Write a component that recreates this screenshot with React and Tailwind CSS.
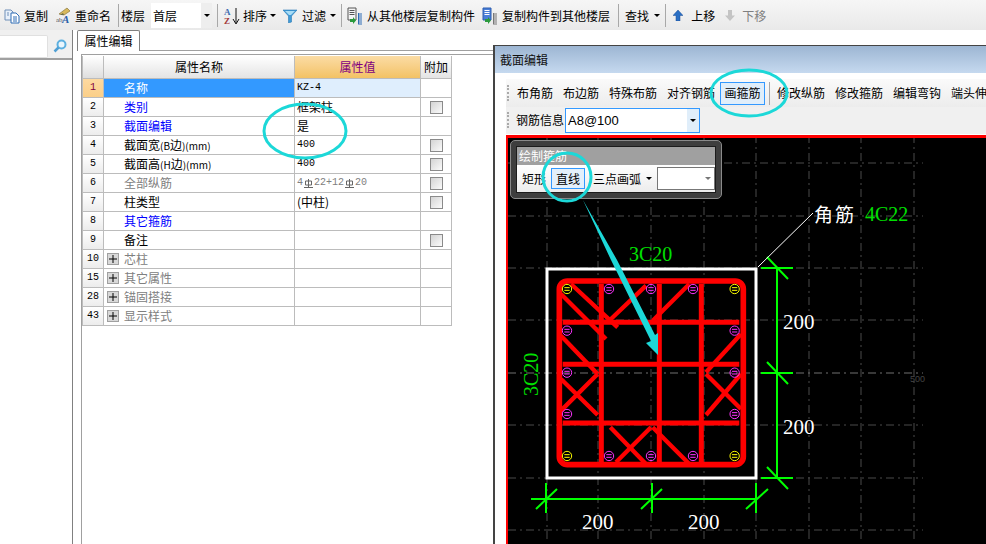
const CopyIcon = () => (
  <svg width="16" height="16" viewBox="0 0 16 16" className="shrink-0">
    <path d="M1 2h6l2 2v8H1z" fill="#e8f0fa" stroke="#6f8fb8" />
    <path d="M7 5h5l3 3v7H7z" fill="#fff" stroke="#2f6cb5" />
    <path d="M9 9h4M9 11h4M9 13h4" stroke="#2f6cb5" />
    <path d="M3 5h2M3 7h2" stroke="#6f8fb8" />
  </svg>
)

const RenameIcon = () => (
  <svg width="17" height="18" viewBox="0 0 17 18" className="shrink-0 -mr-px">
    <path d="M3 7 11 1l3 3-6 4z" fill="#d8b85a" stroke="#8a7a40" strokeWidth="0.7" />
    <path d="M4 8l3-2 1 2z" fill="#6b6b4a" />
    <text x="0" y="15" fontSize="7" fontFamily="Liberation Serif" fill="#555">
      ab
    </text>
    <text x="6" y="16" fontSize="11" fontStyle="italic" fontWeight="700" fontFamily="Liberation Serif" fill="#2a5fa8">
      A
    </text>
  </svg>
)

const SortIcon = () => (
  <svg width="17" height="18" viewBox="0 0 17 18" className="shrink-0">
    <text x="1" y="8" fontSize="9" fontWeight="700" fontFamily="Liberation Serif" fill="#3f6db0">
      A
    </text>
    <text x="1" y="17" fontSize="9" fontWeight="700" fontFamily="Liberation Serif" fill="#a33a3a">
      Z
    </text>
    <path d="M13 1v15M10 12l3 5 3-5" fill="none" stroke="#111" />
  </svg>
)

const FilterIcon = () => (
  <svg width="14" height="14" viewBox="0 0 14 14" className="shrink-0">
    <path d="M0 1h14L8.500 7v6l-3 1V7z" fill="#3f9ad6" stroke="#2b7ab5" strokeWidth="0.6" />
    <path d="M2 2h10L8 6H6z" fill="#a9dcf5" />
  </svg>
)

const FloorCopyIcon = ({ blue }) => (
  <svg width="16" height="18" viewBox="0 0 16 18" className="shrink-0">
    <path d="M1 1h8v12H1z" fill={blue ? '#4a7fd8' : '#f4f4f4'} stroke={blue ? '#2f5fb0' : '#555'} />
    <path d="M2.500 3.500h5M2.500 5.500h5M2.500 7.500h5" stroke={blue ? '#fff' : '#555'} />
    <path d="M3 12h3v-2l3 3.500-3 3.500v-2H3z" fill="#2a9a3c" />
    <path d="M11 7h4M11 9h4M11 11h4M11 13h4M11 15h4M11 17h4" stroke={blue ? '#777' : '#2f6cb5'} />
    <path d="M11.500 6v11" stroke={blue ? '#777' : '#2f6cb5'} />
  </svg>
)

const ArrowIcon = ({ up }) => (
  <svg width="10" height="11" viewBox="0 0 10 11" className="shrink-0">
    {up ? (
      <path d="M5 0l5 5.500H7V11H3V5.500H0z" fill="#2a6fc4" stroke="#1c4f96" strokeWidth="0.5" />
    ) : (
      <path d="M3 0h4v5.500h3L5 11 0 5.500h3z" fill="#c4c4c4" />
    )}
  </svg>
)

const Caret = ({ className = '', color = 'border-t-black' }) => (
  <span
    className={`h-0 w-0 shrink-0 border-x-[3px] border-t-[3px] border-x-transparent ${color} ${className}`}
  />
)

const Sep = ({ className = '' }) => (
  <span className={`h-[23px] w-px shrink-0 bg-[#a8a8a8] ${className}`} />
)

const Grip = ({ className = '' }) => (
  <span
    className={`h-[16px] w-[2px] shrink-0 border-l-2 border-dotted border-[#aaa] ${className}`}
  />
)

const TopToolbar = () => (
  <div className="flex h-[30px] items-center whitespace-nowrap bg-gradient-to-b from-[#f6f6f6] to-[#e9e9e9] pl-[4px] pt-[1px] text-[12px] leading-none text-black">
    <CopyIcon />
    <span className="ml-[4px]">复制</span>
    <span className="ml-[8px]">
      <RenameIcon />
    </span>
    <span className="ml-[3px]">重命名</span>
    <Sep className="ml-[7px]" />
    <span className="ml-[2px]">楼层</span>
    <div className="ml-[6px] flex h-[25px] w-[61px] items-center bg-white pl-[2px]">
      <span className="flex-1">首层</span>
      <span className="flex h-full w-[11px] items-center justify-center bg-[#eeeeee]">
        <Caret />
      </span>
    </div>
    <Sep className="ml-[5px]" />
    <span className="ml-[5px]">
      <SortIcon />
    </span>
    <span className="ml-[3px]">排序</span>
    <Caret className="ml-[3px]" />
    <span className="ml-[7px]">
      <FilterIcon />
    </span>
    <span className="ml-[5px]">过滤</span>
    <Caret className="ml-[4px]" />
    <Sep className="ml-[5px]" />
    <span className="ml-[5px]">
      <FloorCopyIcon />
    </span>
    <span className="ml-[4px]">从其他楼层复制构件</span>
    <span className="ml-[7px]">
      <FloorCopyIcon blue />
    </span>
    <span className="ml-[4px]">复制构件到其他楼层</span>
    <Sep className="ml-[8px]" />
    <span className="ml-[6px]">查找</span>
    <Caret className="ml-[5px]" />
    <Sep className="ml-[5px]" />
    <span className="ml-[7px]">
      <ArrowIcon up />
    </span>
    <span className="ml-[8px]">上移</span>
    <span className="ml-[10px]">
      <ArrowIcon />
    </span>
    <span className="ml-[7px] text-[#808080]">下移</span>
  </div>
)

const SidePanel = () => (
  <div className="h-full w-[73px] shrink-0 border-r border-[#808080]">
    <div className="flex h-[30px] items-center border-b-2 border-[#a0a0a0] bg-[#f0f0f0] pt-[5px] pb-[1px]">
      <div className="h-[23px] w-[48px] rounded-r-[2px] border border-l-0 border-[#e0e0e0] bg-white" />
      <svg width="14" height="14" viewBox="0 0 14 14" className="ml-[5px]">
        <circle cx="8.500" cy="5.500" r="4" fill="#eaf6fd" stroke="#5db0e0" strokeWidth="2" />
        <path d="M5.500 8.500 1.500 12.500" stroke="#4f9fd4" strokeWidth="2.500" />
      </svg>
    </div>
  </div>
)

const Narrow = ({ children }) => <span className="text-[10px]">{children}</span>

const rows = [
  { no: '1', name: '名称', value: 'KZ-4', selected: true, mono: true },
  { no: '2', name: '类别', value: '框架柱', color: 'text-[#0000ff]', check: true },
  { no: '3', name: '截面编辑', value: '是', color: 'text-[#0000ff]' },
  {
    no: '4',
    name: (
      <>
        截面宽<Narrow>(B</Narrow>边<Narrow>)(mm)</Narrow>
      </>
    ),
    value: '400',
    check: true,
    mono: true,
  },
  {
    no: '5',
    name: (
      <>
        截面高<Narrow>(H</Narrow>边<Narrow>)(mm)</Narrow>
      </>
    ),
    value: '400',
    check: true,
    mono: true,
  },
  { no: '6', name: '全部纵筋', rebar: true, color: 'text-[#808080]', check: true },
  { no: '7', name: '柱类型', value: '(中柱)', check: true },
  { no: '8', name: '其它箍筋', color: 'text-[#0000ff]' },
  { no: '9', name: '备注', check: true },
  { no: '10', name: '芯柱', group: true },
  { no: '15', name: '其它属性', group: true },
  { no: '28', name: '锚固搭接', group: true },
  { no: '43', name: '显示样式', group: true },
]

const RebarMark = () => (
  <svg width="9" height="9" viewBox="0 0 9 9" className="mx-[1px] shrink-0">
    <path d="M1.500 2h6v4h-6zM4.500 0v8M0 8.500h9" fill="none" stroke="#666" />
  </svg>
)

const Checkbox = () => (
  <span className="block h-[13px] w-[13px] border border-[#8a8a8a] bg-gradient-to-br from-[#d4d4d4] to-[#fbfbfb]" />
)

const PlusBox = () => (
  <span className="absolute left-[3px] top-[3px] flex h-[12px] w-[12px] items-center justify-center border border-[#a0a0a0] bg-[#d8d8d8] text-[13px] leading-none text-black">
    <svg width="8" height="8" viewBox="0 0 8 8">
      <path d="M4 0v8M0 4h8" stroke="#000" />
    </svg>
  </span>
)

const PropertyRow = ({ row }) => (
  <div className="grid h-[19px] grid-cols-[21px_191px_126px_31px] text-[12px] leading-none">
    <div
      className={`flex items-center justify-center border-b border-r border-[#bcbcbc] font-['Liberation_Mono',monospace] text-[10px] ${
        row.selected
          ? 'bg-gradient-to-b from-[#fdd9a0] to-[#fbcf88] text-[#800040]'
          : 'bg-gradient-to-b from-white to-[#ececec] text-black'
      }`}
    >
      {row.no}
    </div>
    <div
      className={`relative flex items-center border-b border-r border-[#bcbcbc] pl-[20px] ${
        row.selected ? 'bg-[#3399ff] text-white' : row.color || (row.group ? 'text-[#808080]' : 'text-black')
      }`}
    >
      {row.group ? <PlusBox /> : null}
      <span>{row.name}</span>
    </div>
    <div
      className={`flex items-center border-b border-r border-[#bcbcbc] pl-[2px] ${
        row.selected ? 'bg-[#dfeefd]' : ''
      } ${row.mono ? "font-['Liberation_Mono',monospace] text-[10px]" : ''}`}
    >
      {row.rebar ? (
        <span className="flex items-center font-['Liberation_Mono',monospace] text-[10px] text-[#808080]">
          4<RebarMark />
          22+12
          <RebarMark />
          20
        </span>
      ) : (
        row.value
      )}
    </div>
    <div className="flex items-center justify-center border-b border-r border-[#bcbcbc]">
      {row.check ? <Checkbox /> : null}
    </div>
  </div>
)

const PropertyPanel = () => (
  <div className="flex h-full flex-1 flex-col pl-[4px]">
    <div className="flex h-[21px] shrink-0">
      <div className="flex w-[63px] items-center justify-center rounded-t-[2px] border border-b-0 border-[#808080] bg-white text-[12px]">
        属性编辑
      </div>
      <div className="flex-1 border-b border-[#a0a0a0]" />
    </div>
    <div className="ml-[4px] mt-[3px] flex-1 border-l border-t border-[#a0a0a0] pt-px">
      <div className="w-[369px] border-l border-[#bcbcbc]">
        <div className="grid h-[23px] grid-cols-[21px_191px_126px_31px] text-[12px] leading-none">
          <div className="border-b border-r border-[#bcbcbc] bg-gradient-to-b from-white to-[#dedede]" />
          <div className="flex items-center justify-center border-b border-r border-[#bcbcbc] bg-gradient-to-b from-white to-[#e4e4e4]">
            属性名称
          </div>
          <div className="flex items-center justify-center border-b border-r border-[#bcbcbc] bg-gradient-to-b from-[#fbdca4] to-[#f3c264] text-[#800080]">
            属性值
          </div>
          <div className="flex items-center justify-center border-b border-r border-[#bcbcbc] bg-gradient-to-b from-white to-[#e4e4e4]">
            附加
          </div>
        </div>
        {rows.map((row) => (
          <PropertyRow key={row.no} row={row} />
        ))}
      </div>
    </div>
  </div>
)

const gridX = [546, 597, 650, 703, 755, 808, 860, 913]
const gridY = [164, 217, 269, 321, 426, 479, 531]
const barX = [138, 264, 390, 516, 641]
const barY = [215, 341, 465]
const ties = [
  [150, 75, 290, 205],
  [120, 105, 255, 240],
  [120, 230, 230, 345],
  [270, 180, 375, 80],
  [395, 185, 505, 75],
  [660, 225, 555, 340],
  [120, 360, 230, 468],
  [230, 345, 120, 455],
  [555, 345, 660, 450],
  [660, 345, 555, 468],
  [268, 505, 375, 615],
  [390, 505, 285, 610],
  [395, 505, 505, 615],
]

const Bar = ({ x, y, color }) => (
  <g stroke={color} strokeWidth="3" fill="none">
    <circle cx={x} cy={y} r="14" />
    <path d={`M${x - 8} ${y - 4}h16M${x - 8} ${y + 4}h16`} strokeWidth="3" />
  </g>
)

const Section = () => (
  <svg width="481" height="408" viewBox="507 139 481 408" className="block">
    <g stroke="#4a4a4a" strokeWidth="1" strokeDasharray="8 4 2 4">
      {gridX.map((x) => (
        <line key={x} x1={x} y1="136" x2={x} y2="544" />
      ))}
      {gridY.map((y) => (
        <line key={y} x1="507" y1={y} x2="922" y2={y} />
      ))}
      <line x1="507" y1="374" x2="922" y2="374" stroke="#707070" />
    </g>
    <rect x="546" y="270" width="209" height="209" fill="none" stroke="#fff" strokeWidth="3" />
    <g transform="translate(520 260) scale(0.3333)">
      <g stroke="#ff0000" strokeWidth="15" fill="none">
        <rect x="115" y="66" width="552" height="551" rx="24" strokeWidth="17" />
        <path d="M241 75V610M415 75V610M541 75V610" />
        <path d="M125 190H655M125 316H655M125 492H655" />
        {ties.map((t) => (
          <line key={t.join('-')} x1={t[0]} y1={t[1]} x2={t[2]} y2={t[3]} strokeWidth="13" />
        ))}
      </g>
      {barX.map((x) => (
        <Bar key={x} x={x} y={90} color={x === 138 || x === 641 ? '#ffff00' : '#ff33ff'} />
      ))}
      {barX.map((x) => (
        <Bar key={x} x={x} y={591} color={x === 138 || x === 641 ? '#ffff00' : '#ff33ff'} />
      ))}
      {barY.map((y) => (
        <Bar key={y} x={138} y={y} color="#ff33ff" />
      ))}
      {barY.map((y) => (
        <Bar key={y} x={641} y={y} color="#ff33ff" />
      ))}
    </g>
    <g stroke="#00ff00" strokeWidth="2" fill="none">
      <path d="M776 269V479M760 269H792M760 374H792M760 479H792" />
      <path d="M766 258 787 280M766 363 787 385M766 468 787 490" />
      <path d="M530 500H755M545 484V514M651 484V514M755 484V514" />
      <path d="M535 510 556 490M640 510 661 490M745 510 767 490" />
    </g>
    <line x1="757" y1="268" x2="812" y2="214" stroke="#fff" strokeWidth="1" />
    <g fontFamily="Liberation Serif">
      <text x="628" y="262" fontSize="20" fill="#00e000">
        3C20
      </text>
      <text x="0" y="0" fontSize="20" fill="#00e000" transform="translate(537 397) rotate(-90)">
        3C20
      </text>
      <text x="864" y="222" fontSize="20" fill="#00e000">
        4C22
      </text>
      <text x="782" y="330" fontSize="21" fill="#fff">
        200
      </text>
      <text x="782" y="435" fontSize="21" fill="#fff">
        200
      </text>
      <text x="581" y="530" fontSize="21" fill="#fff">
        200
      </text>
      <text x="687" y="530" fontSize="21" fill="#fff">
        200
      </text>
    </g>
    <text x="813" y="223" fontSize="19" fill="#fff" fontFamily="Noto Sans CJK SC" letterSpacing="2">
      角筋
    </text>
    <text x="909" y="383" fontSize="9" fill="#444" fontFamily="Liberation Sans">
      500
    </text>
  </svg>
)

const DrawTieBar = () => (
  <div className="absolute left-[2px] top-[2px] z-10 w-[212px] rounded-[5px] border border-[#8a8a8a] bg-[#3e3e3e] px-[5px] py-[5px] text-[12px] leading-none whitespace-nowrap">
    <div className="border border-[#1c1c1c]">
      <div className="flex h-[18px] items-center bg-[#a0a0a0] pl-[2px] text-white">绘制箍筋</div>
      <div className="flex h-[27px] items-center bg-gradient-to-b from-white to-[#ececec] pl-[5px] text-black">
        <span className="shrink-0">矩形</span>
        <span className="ml-[5px] flex h-[21px] w-[34px] shrink-0 items-center justify-center border border-[#3399ff] bg-[#e4f0fb]">
          直线
        </span>
        <span className="ml-[8px] shrink-0">三点画弧</span>
        <Caret className="ml-[5px]" />
        <div className="ml-[5px] flex h-[23px] w-[58px] shrink-0 items-center justify-end border border-[#777] bg-white pr-[3px]">
          <Caret color="border-t-[#777]" />
        </div>
      </div>
    </div>
  </div>
)

const SectionWindow = () => (
  <div className="absolute left-[493px] top-[45px] h-[499px] w-[493px] border-l-2 border-t border-[#444] bg-white pl-[11px]">
    <div className="-ml-[11px] flex h-[27px] items-center bg-gradient-to-b from-[#9db6d3] to-[#c5d9ef] pl-[5px] text-[12px] text-[#111]">
      截面编辑
    </div>
    <div className="pt-[6px] text-[12px] leading-none text-black">
      <div className="flex h-[28px] items-center bg-gradient-to-b from-[#fafafa] to-[#ececec] pl-[1px] whitespace-nowrap">
        <Grip />
        <span className="ml-[8px] shrink-0">布角筋</span>
        <span className="ml-[10px] shrink-0">布边筋</span>
        <span className="ml-[10px] shrink-0">特殊布筋</span>
        <span className="ml-[10px] shrink-0">对齐钢筋</span>
        <span className="ml-[5px] flex h-[23px] w-[45px] shrink-0 items-center justify-center border border-[#3399ff] bg-[#e0eefa]">
          画箍筋
        </span>
        <Sep className="ml-[4px] h-[14px]" />
        <span className="ml-[7px] shrink-0">修改纵筋</span>
        <span className="ml-[10px] shrink-0">修改箍筋</span>
        <span className="ml-[10px] shrink-0">编辑弯钩</span>
        <span className="ml-[10px] shrink-0">端头伸</span>
      </div>
      <div className="flex h-[27px] items-center bg-[#f0f0f0] pl-[1px] pb-[1px]">
        <Grip />
        <span className="ml-[7px]">钢筋信息</span>
        <div className="ml-px flex h-[25px] w-[135px] items-center border border-[#3399ff] bg-white pl-[2px] font-['Liberation_Sans',sans-serif] text-[13px]">
          <span className="flex-1">A8@100</span>
          <span className="flex h-full w-[12px] items-center justify-center bg-[#e0eefa]">
            <Caret />
          </span>
        </div>
      </div>
    </div>
    <div className="relative mt-[1px] overflow-hidden border-l-2 border-t-[3px] border-[#ff0000] bg-black">
      <DrawTieBar />
      <Section />
    </div>
  </div>
)

const Annotations = () => (
  <svg width="986" height="544" viewBox="0 0 986 544" className="pointer-events-none absolute left-0 top-0 z-20">
    <g fill="none" stroke="#1cd8d8" strokeWidth="3">
      <ellipse cx="305" cy="131" rx="41" ry="27" />
      <ellipse cx="749" cy="93" rx="38" ry="23" />
      <circle cx="567" cy="177" r="24" />
    </g>
    <polygon
      points="583,200 617,260 655,335 658,333 658,355 646,343 651,341 611,260"
      fill="#1cd8d8"
    />
  </svg>
)

export default function App() {
  return (
    <div className="relative h-[544px] w-[986px] overflow-hidden bg-white font-['Noto_Sans_CJK_SC','Liberation_Sans',sans-serif]">
      <TopToolbar />
      <div className="flex h-[514px]">
        <SidePanel />
        <PropertyPanel />
      </div>
      <SectionWindow />
      <Annotations />
    </div>
  )
}
